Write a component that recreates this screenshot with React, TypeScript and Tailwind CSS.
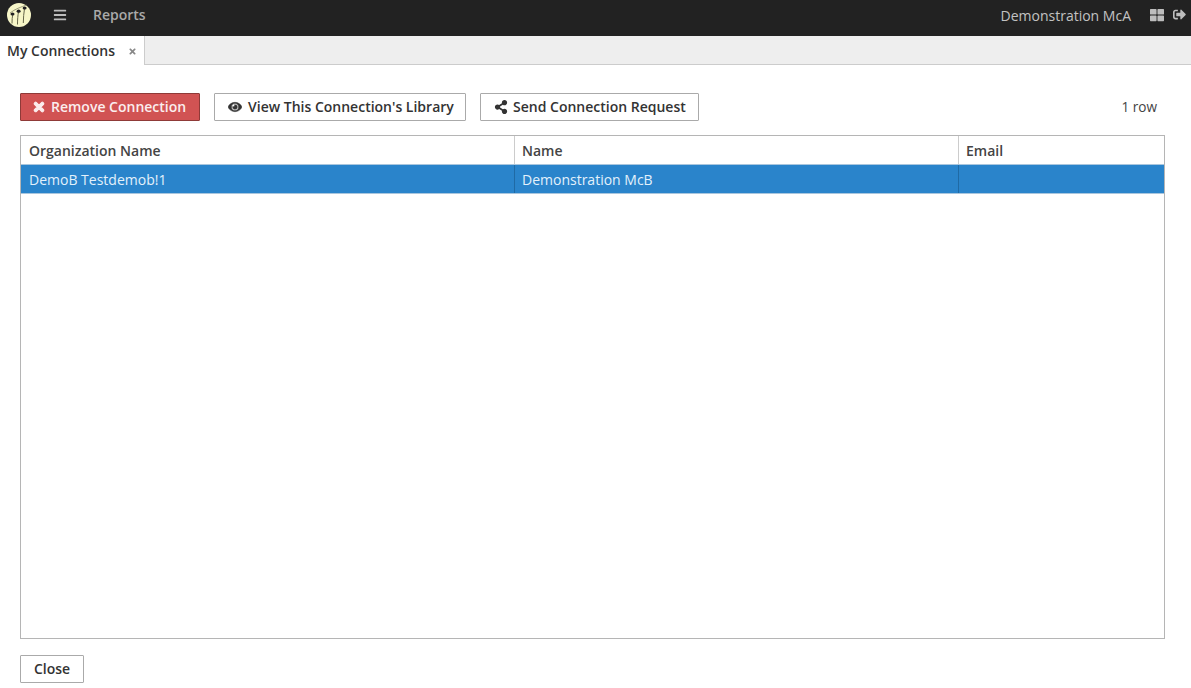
import { FaBars, FaTimes, FaEye, FaShareAlt, FaThLarge, FaSignOutAlt } from "react-icons/fa"

function Logo() {
  return (
    <svg width="24" height="24" viewBox="0 0 24 24">
      <circle cx="12" cy="12" r="12" fill="#f7f6c8" />
      {/* staff arc */}
      <path d="M3 10 C8 6 14 4 19.5 2" fill="none" stroke="#77775a" strokeWidth="0.7" />
      {/* stems */}
      <path d="M5.8 11 C5.2 14 5 17 5 20.5 M11.6 8.5 C10.8 12 10.5 17 10.5 21.5 M17.6 5 C16.8 10 16.3 15 16.3 20" fill="none" stroke="#66664a" strokeWidth="1" />
      <ellipse cx="5.5" cy="11" rx="2" ry="1.6" fill="#222" />
      <ellipse cx="11.6" cy="8.2" rx="2" ry="1.6" fill="#222" />
      <ellipse cx="17.6" cy="5" rx="2" ry="1.6" fill="#222" />
    </svg>
  )
}

export default function App() {
  return (
    <div className="flex h-screen flex-col overflow-hidden bg-white font-['Open_Sans',sans-serif] text-sm text-[#333]">
      {/* Top bar */}
      <div className="flex h-9 shrink-0 items-center bg-[#222222] pb-1 text-[#bdbdbd]">
        <div className="ml-[7px] -mt-[2px]">
          <Logo />
        </div>
        <FaBars className="ml-[22px] -mt-[2px] text-[14px]" />
        <span className="ml-[26px] -mt-[2px] font-semibold text-[#a9a9a9]">Reports</span>
        <span className="ml-auto text-[#c2c2c2]">Demonstration McA</span>
        <FaThLarge className="ml-[19px] -mt-[3px] text-[14px]" />
        <FaSignOutAlt className="ml-[9px] mr-[5px] -mt-[3px] text-[13px]" />
      </div>

      {/* Tabs */}
      <div className="flex h-[29px] shrink-0 border-b border-[#cccccc] bg-[#eeeeee]">
        <div className="flex h-[29px] w-[145px] items-center border-r border-[#cccccc] bg-white pl-[7px]">
          <span className="font-semibold text-[#333]">My Connections</span>
          <FaTimes className="ml-[13px] mt-[2px] text-[9px] text-[#888]" />
        </div>
      </div>

      {/* Content */}
      <div className="flex min-h-0 flex-1 flex-col pl-5 pr-[26px] pt-7">
        <div className="flex items-center">
          <button className="flex h-7 w-[180px] items-center gap-[5px] rounded-[1px] border border-[#8f3a38] bg-[#d15353] pl-[11px] font-semibold text-[#fbeeee]">
            <FaTimes className="text-[14px] [stroke-width:40]" />
            Remove Connection
          </button>
          <button className="ml-[14px] flex h-7 w-[252px] items-center gap-[6px] rounded-[1px] border border-[#aaaaaa] bg-white pl-[13px] font-semibold text-[#333]">
            <FaEye className="text-[14px] [stroke-width:20]" />
            View This Connection's Library
          </button>
          <button className="ml-[14px] flex h-7 w-[219px] items-center gap-[5px] rounded-[1px] border border-[#aaaaaa] bg-white pl-[13px] font-semibold text-[#333]">
            <FaShareAlt className="text-[14px]" />
            Send Connection Request
          </button>
          <span className="ml-auto pr-2 text-[13.6px] text-[#444]">1 row</span>
        </div>

        {/* Grid */}
        <div className="mt-[14px] flex h-[504px] flex-col border border-[#b5b5b5]">
          <div className="grid h-[28px] shrink-0 grid-cols-[494px_444px_1fr] font-semibold text-[#444]">
            <div className="flex items-center border-r border-[#cccccc] pl-2 pt-px">Organization Name</div>
            <div className="flex items-center border-r border-[#cccccc] pl-[7px] pt-px">Name</div>
            <div className="flex items-center pl-[7px] pt-px">Email</div>
          </div>
          <div className="grid h-[30px] shrink-0 grid-cols-[494px_444px_1fr] border-y border-[#a9c6de] bg-[#2a84cb] text-[#e3f1fb]">
            <div className="flex items-center border-r border-[#1f6aa5] pl-2 pt-px">DemoB Testdemob!1</div>
            <div className="flex items-center border-r border-[#1f6aa5] pl-[7px] pt-px">Demonstration McB</div>
            <div />
          </div>
        </div>

        <div className="mt-4">
          <button className="h-7 w-16 rounded-[1px] border border-[#aaaaaa] bg-white font-semibold text-[#333]">Close</button>
        </div>
      </div>
    </div>
  )
}
